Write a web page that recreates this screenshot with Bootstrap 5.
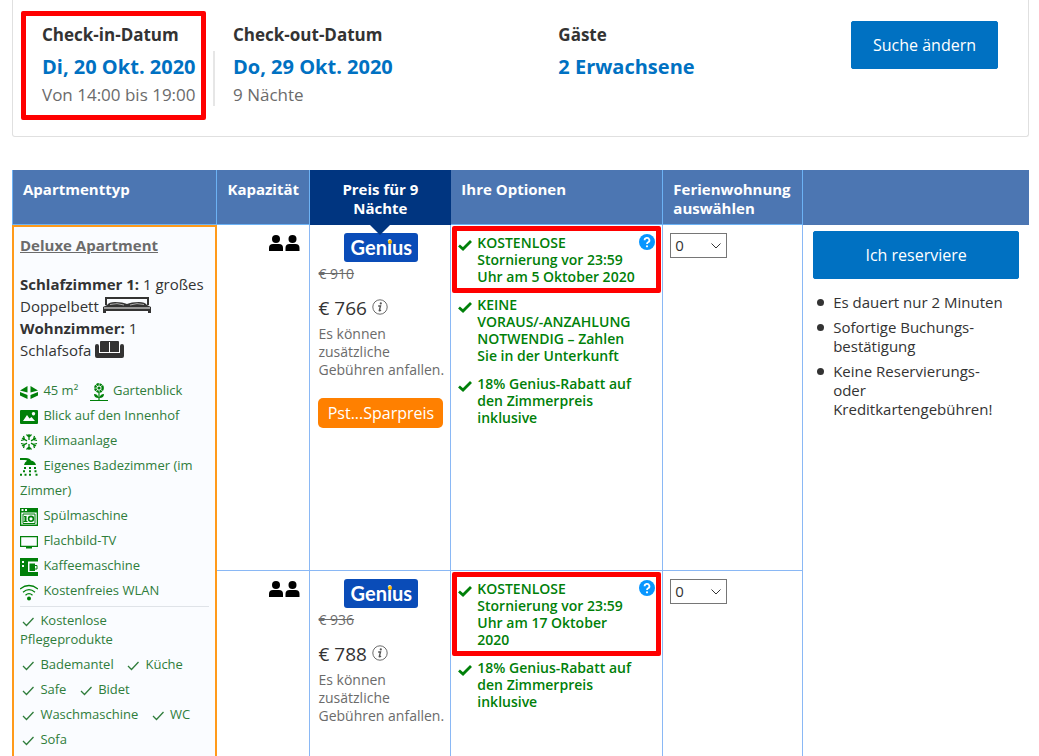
<!DOCTYPE html>
<html lang="de">
<head>
<meta charset="utf-8">
<meta name="viewport" content="width=device-width, initial-scale=1">
<title>Verfügbarkeit</title>
<link href="https://cdn.jsdelivr.net/npm/bootstrap@5.3.0/dist/css/bootstrap.min.css" rel="stylesheet">
<script src="https://cdn.jsdelivr.net/npm/bootstrap@5.3.0/dist/js/bootstrap.bundle.min.js"></script>
<style>
  body { font-family: "Open Sans", "Noto Sans", sans-serif; color: #333; font-size: 15px; line-height: 20px; }
  .page { padding: 0 10px 0 12px; height: 100vh; overflow: hidden; }
  a { color: inherit; }

  /* search summary */
  .summary { border: 1px solid #e0e0e0; border-top: 0; border-radius: 0 0 3px 3px; padding: 11px 30px 16px 8px; margin-bottom: 33px; }
  .marked { border: 5px solid #f00; border-radius: 2px; }
  .stay { width: 185px; height: 109px; padding: 5px 0 0 16px; }
  .fact { padding-top: 10px; }
  .fact-out { width: 33.3%; margin-left: 27px; }
  .rule-v { border-left: 2px solid #e6e6e6; height: 55px; margin: 40px -9px 0 7px; }
  .fact-label { font-size: 17px; font-weight: 700; line-height: 28px; }
  .fact-value { font-size: 20px; font-weight: 700; line-height: 36px; color: #0071c2; }
  .fact-sub { font-size: 17px; line-height: 20px; color: #6b6b6b; }
  .btn-cta { --bs-btn-bg: #0071c2; --bs-btn-border-color: #0071c2; --bs-btn-color: #fff; --bs-btn-hover-bg: #005999; --bs-btn-hover-color: #fff; --bs-btn-border-radius: 2px; --bs-btn-font-size: 16px; --bs-btn-line-height: 24px; --bs-btn-padding-y: 11px; --bs-btn-padding-x: 21px; }
  .change { margin-top: 10px; }

  /* room table */
  .rooms { width: 100%; table-layout: fixed; border-collapse: separate; border-spacing: 0; }
  .rooms th { background: #4c76b2; color: #fff; font-weight: 700; line-height: 19px; height: 55px; padding: 10px 0 5px 10px; vertical-align: top; border-right: 1px solid #6cb2f5; border-bottom: 1px solid #6cb2f5; }
  .rooms th:first-child { border-left: 1px solid #6cb2f5; }
  .rooms th:last-child { border-right: 0; border-bottom: 0; }
  .rooms th.th-price { background: #003580; border-color: #003580; padding: 10px 10px 5px; text-align: center; position: relative; }
  .th-price::after { content: ""; position: absolute; top: 100%; left: 50%; margin-left: -11px; border: 11px solid transparent; border-top-color: #003580; border-bottom: 0; z-index: 1; }
  .rooms td { vertical-align: top; border-right: 1px solid #8ab8f5; border-bottom: 1px solid #8ab8f5; }
  .rooms td.cell-room { border: 2px solid #ff9a1a; background: #fafcff; padding: 8px 6px 20px; }
  .rooms td.cell-book { border-right: 0; border-bottom: 0; padding: 6px 10px 0; }
  .offer { height: 346px; }
  .cell-cap { text-align: right; padding: 7px 9px 0 0; }
  .cell-price { padding: 8px 6px 0 8px; }
  .cell-opt { padding: 0; }
  .cell-qty { padding: 8px 0 0 7px; }

  .room-name { font-weight: 700; color: #6b6b6b; }
  .beds { line-height: 22px; margin-top: 18px; }
  .beds svg { vertical-align: -2px; }
  .icn { width: 18px; height: 18px; fill: #008009; }
  .facts { font-size: 13px; line-height: 25px; color: #2f7d3b; margin-top: 17px; }
  .facts .icn { margin-right: 2px; }
  .extras { font-size: 13px; line-height: 19px; color: #2f7d3b; border-top: 1px solid #dfe3e8; padding-top: 4px; margin-top: 3px; }
  .extra-row { margin-bottom: 6px; }
  .extras .icn { width: 15px; height: 13px; fill: none; stroke: #2f7d3b; stroke-width: 1.3; margin-right: 2px; }

  .genius { background: #0a4cb8; color: #fff; font: 700 20px/29px "Lato", sans-serif; width: 74px; height: 29px; border-radius: 3px; margin: 0 auto; text-align: center; }
  .genius-i { position: relative; }
  .genius-i::before { content: ""; position: absolute; left: 50%; margin-left: -2px; top: 5px; width: 4px; height: 4px; border-radius: 50%; background: #feba02; }
  .was { font-size: 14px; line-height: 24px; color: #6b6b6b; }
  .now { font-size: 19px; line-height: 24px; margin-top: 10px; }
  .fees { font-size: 14px; line-height: 18px; color: #6b6b6b; margin-top: 5px; white-space: nowrap; }
  .deal { background: #ff8000; color: #fff; font-size: 16px; line-height: 30px; border-radius: 5px; text-align: center; margin-top: 19px; width: 125px; }

  .opt { font-size: 14px; font-weight: 600; line-height: 17px; color: #008009; display: flex; }
  .opt .tick { width: 14px; height: 12px; flex: none; margin: 5px 5px 0 0; }
  .opt-box { margin: 1px 1px 0; padding: 3px 0 3px 1px; }
  .opt-plain { padding: 3px 24px 0 7px; }
  .opt-plain + .opt-plain { padding-top: 11px; }
  .help { width: 16px; height: 16px; margin: 0 1px 0 auto; flex: none; }
  .qty { width: 57px; height: 25px; border: 1px solid #767676; border-radius: 0; padding: 0 4px; font-size: 15px; line-height: 23px; color: #333;
    background: #fff url("data:image/svg+xml,%3Csvg xmlns='http://www.w3.org/2000/svg' viewBox='0 0 10 6'%3E%3Cpath fill='none' stroke='%23333' d='M.5.5 5 5 9.5.5'/%3E%3C/svg%3E") no-repeat right 5px center / 10px 6px; }
  .perks { margin: 14px 0 0; padding-left: 20px; line-height: 19px; list-style: none; }
  .perks li { margin-bottom: 6px; position: relative; }
  .perks li::before { content: ""; position: absolute; left: -16px; top: 6px; width: 7px; height: 7px; border-radius: 50%; background: #333; }
</style>
</head>
<body>
<svg class="d-none" aria-hidden="true">
  <symbol id="person2" viewBox="0 0 31 17"><circle cx="7" cy="4" r="4"/><path d="M0 16v-3q0-4 4-4h6q4 0 4 4v3z"/><circle cx="23.500" cy="4" r="4"/><path d="M16.500 16v-3q0-4 4-4h6q4 0 4 4v3z"/></symbol>
  <symbol id="tick" viewBox="0 0 14 12"><path d="M1 6.500l4 3.500L13 2" fill="none" stroke="#008009" stroke-width="2.800"/></symbol>
  <symbol id="thin" viewBox="0 0 15 13"><path d="M3 7l3.500 3.500L13.500 3"/></symbol>
  <symbol id="q" viewBox="0 0 16 16"><circle cx="8" cy="8" r="8" fill="#0896ff"/><path d="M5.600 6.200a2.400 2.300 0 1 1 3.500 2Q8 8.800 8 10" fill="none" stroke="#fff" stroke-width="1.800"/><circle cx="8" cy="12.300" r="1.100" fill="#fff"/></symbol>
  <symbol id="info" viewBox="0 0 16 16"><circle cx="8" cy="8" r="7.200" fill="none" stroke="#6b6b6b"/><circle cx="8.800" cy="4.400" r="1.100" fill="#555"/><path d="M6.200 7h2.300l-1.200 4.600q.6.300 1.700-.6" fill="none" stroke="#555" stroke-width="1.400"/></symbol>
</svg>

<main class="page">
  <section class="summary d-flex align-items-start">
    <div class="stay marked flex-shrink-0">
      <div class="fact-label">Check-in-Datum</div>
      <div class="fact-value">Di, 20 Okt. 2020</div>
      <div class="fact-sub">Von 14:00 bis 19:00</div>
    </div>
    <div class="rule-v"></div>
    <div class="fact fact-out">
      <div class="fact-label">Check-out-Datum</div>
      <div class="fact-value">Do, 29 Okt. 2020</div>
      <div class="fact-sub">9 Nächte</div>
    </div>
    <div class="fact flex-grow-1">
      <div class="fact-label">Gäste</div>
      <div class="fact-value">2 Erwachsene</div>
    </div>
    <button type="button" class="btn btn-cta change">Suche ändern</button>
  </section>

  <table class="rooms">
    <colgroup><col style="width:20.2%"><col style="width:9.15%"><col style="width:13.85%"><col style="width:20.85%"><col style="width:13.75%"><col></colgroup>
    <thead>
      <tr><th>Apartmenttyp</th><th>Kapazität</th><th class="th-price">Preis für 9 Nächte</th><th>Ihre Optionen</th><th>Ferienwohnung auswählen</th><th></th></tr>
    </thead>
    <tbody>
      <tr class="offer">
        <td class="cell-room" rowspan="2">
          <a href="#" class="room-name">Deluxe Apartment</a>
          <div class="beds">
            <b>Schlafzimmer 1:</b> 1 großes Doppelbett
            <svg width="48" height="17" viewBox="0 0 48 17" fill="#333"><path d="M2 0h44v8h-2V2H4v6H2z"/><path d="M4 8q2-3 8-3 8 0 12 2 4-2 12-2 6 0 8 3l4 2v6h-3v-2H3v2H0v-6z"/><path d="M7 7.500q7-2 14 .5M27 8q7-2.500 14-.5" fill="none" stroke="#aaa"/><path d="M1 11h46" stroke="#fff" stroke-width="1.200"/></svg><br>
            <b>Wohnzimmer:</b> 1 Schlafsofa
            <svg width="29" height="17" viewBox="0 0 29 17" fill="#333"><path d="M5 1q0-1 1-1h17q1 0 1 1v10H5z"/><path d="M0 5q0-2 2-2t2 2v7h21V5q0-2 2-2t2 2v10q0 2-2 2H2q-2 0-2-2z"/><path d="M4.500 2v9.500h20V2M14.500 1v10" fill="none" stroke="#fff"/></svg>
          </div>
          <div class="facts">
            <div>
              <svg class="icn" viewBox="0 0 18 18"><path d="M7.500 3v6.500L0 7.500zM10.500 3v6.500L18 7.500zM0 9l7.500 3v4L0 12.500zM18 9l-7.500 3v4l7.500-3.500z"/></svg>
              45 m²
              <svg class="icn ms-2" viewBox="0 0 18 18"><circle cx="9" cy="5" r="3.700" fill="none" stroke="#008009" stroke-width="2.400" stroke-dasharray="2.300 .6"/><circle cx="9" cy="5" r="1.600"/><path d="M8.400 9h1.200v8H8.400zM8.500 15Q4 15 4 11q4 0 4.500 4zM9.500 15q4.500 0 4.500-4-4 0-4.500 4zM0 17h18v1H0z"/></svg>
              Gartenblick
            </div>
            <div>
              <svg class="icn" viewBox="0 0 18 18"><path fill-rule="evenodd" d="M1 2h16q1 0 1 1v12q0 1-1 1H1q-1 0-1-1V3q0-1 1-1zm2 11h12l-3.500-4-2 1.500L7 7zM13.500 4a1.700 1.700 0 1 0 .01 0z"/></svg>
              Blick auf den Innenhof
            </div>
            <div>
              <svg class="icn" viewBox="0 0 18 18" style="stroke:#008009;fill:none"><path stroke-width="1.300" d="M9 1v6M9 11v6M2 5l5 2.900M11 10.100l5 2.900M16 5l-5 2.900M7 10.100L2 13M6.500 1.500L9 4l2.500-2.500M6.500 16.500L9 14l2.500 2.500M1 7.500l3.500-1L3.500 3M17 10.500l-3.500 1 1 3.500M17 7.500l-3.500-1 1-3.500M1 10.500l3.500 1-1 3.500"/></svg>
              Klimaanlage
            </div>
            <div>
              <svg class="icn" viewBox="0 0 18 18"><path d="M0 0h6q4 0 5 2.500 4 .5 5 4.500H4q.5-3 3-4.200Q6.500 2 5 2H0z"/><path d="M4 9h2v2H4zM9 9h2v2H9zM14 9h2v2h-2zM3 12.200h2v2H3zM9 12.200h2v2H9zM14.500 12.200h2v2h-2zM0 15.800h2v2H0zM4.500 15.800h2v2h-2zM9 15.800h2v2H9zM15.500 15.800h2v2h-2z"/></svg>
              Eigenes Badezimmer (im Zimmer)
            </div>
            <div>
              <svg class="icn" viewBox="0 0 18 18"><path fill-rule="evenodd" d="M0 0h18v18H0zM1.500 1v2h2V1zm3.500 0v2h2V1zM1.300 4.500v12h15.400v-12z"/><path d="M4 8h2.500v5h1V14H3.500v-1H4.500V9H4z"/><path d="M3 6h12v9.500H3z" fill="none" stroke="#008009"/><circle cx="11" cy="10.800" r="2.400" fill="none" stroke="#008009" stroke-width="1.600"/></svg>
              Spülmaschine
            </div>
            <div>
              <svg class="icn" viewBox="0 0 18 18"><path fill-rule="evenodd" d="M0 3h18v11h-6v1.500H6V14H0zm1.200 1.200v8.600h15.600V4.200z"/></svg>
              Flachbild-TV
            </div>
            <div>
              <svg class="icn" viewBox="0 0 18 18"><path fill-rule="evenodd" d="M0 0h18v3.500H8V14h10v4H0zM2 3v2h2V3zm0 4v2h2V7z"/><path d="M9.500 5.500H15V13H9.500z"/><path d="M15 7.500h2v3.500h-2" fill="none" stroke="#008009"/></svg>
              Kaffeemaschine
            </div>
            <div>
              <svg class="icn" viewBox="0 0 18 18"><path d="M0 6q9-7 18 0M3 9.200q6-5 12 0M5.500 12.200q3.500-3 7 0" fill="none" stroke="#008009" stroke-width="1.300"/><circle cx="9" cy="15.500" r="2"/></svg>
              Kostenfreies WLAN
            </div>
          </div>
          <div class="extras">
            <div class="extra-row"><svg class="icn"><use href="#thin"/></svg> Kostenlose<br>Pflegeprodukte</div>
            <div class="extra-row"><svg class="icn"><use href="#thin"/></svg> Bademantel <svg class="icn ms-2"><use href="#thin"/></svg> Küche</div>
            <div class="extra-row"><svg class="icn"><use href="#thin"/></svg> Safe <svg class="icn ms-2"><use href="#thin"/></svg> Bidet</div>
            <div class="extra-row"><svg class="icn"><use href="#thin"/></svg> Waschmaschine <svg class="icn ms-2"><use href="#thin"/></svg> WC</div>
            <div class="extra-row"><svg class="icn"><use href="#thin"/></svg> Sofa</div>
          </div>
        </td>
        <td class="cell-cap"><svg width="31" height="17"><use href="#person2"/></svg></td>
        <td class="cell-price">
          <div class="genius">Gen<span class="genius-i">i</span>us</div>
          <div class="was"><s>€ 910</s></div>
          <div class="now">€ 766 <svg width="16" height="16" class="align-baseline"><use href="#info"/></svg></div>
          <div class="fees">Es können<br>zusätzliche<br>Gebühren anfallen.</div>
          <div class="deal">Pst...Sparpreis</div>
        </td>
        <td class="cell-opt">
          <div class="opt opt-box marked"><svg class="tick"><use href="#tick"/></svg><span>KOSTENLOSE<br>Stornierung vor 23:59<br>Uhr am 5 Oktober 2020</span><svg class="help"><use href="#q"/></svg></div>
          <div class="opt opt-plain"><svg class="tick"><use href="#tick"/></svg><span>KEINE<br>VORAUS/-ANZAHLUNG<br>NOTWENDIG – Zahlen<br>Sie in der Unterkunft</span></div>
          <div class="opt opt-plain"><svg class="tick"><use href="#tick"/></svg><span>18% Genius-Rabatt auf<br>den Zimmerpreis<br>inklusive</span></div>
        </td>
        <td class="cell-qty"><select class="qty form-select" aria-label="Anzahl, 766 Euro"><option>0</option><option>1</option></select></td>
        <td class="cell-book" rowspan="2">
          <button type="button" class="btn btn-cta w-100">Ich reserviere</button>
          <ul class="perks">
            <li>Es dauert nur 2 Minuten</li>
            <li>Sofortige Buchungs-<br>bestätigung</li>
            <li>Keine Reservierungs-<br>oder<br>Kreditkartengebühren!</li>
          </ul>
        </td>
      </tr>
      <tr>
        <td class="cell-cap"><svg width="31" height="17"><use href="#person2"/></svg></td>
        <td class="cell-price">
          <div class="genius">Gen<span class="genius-i">i</span>us</div>
          <div class="was"><s>€ 936</s></div>
          <div class="now">€ 788 <svg width="16" height="16" class="align-baseline"><use href="#info"/></svg></div>
          <div class="fees">Es können<br>zusätzliche<br>Gebühren anfallen.</div>
        </td>
        <td class="cell-opt">
          <div class="opt opt-box marked"><svg class="tick"><use href="#tick"/></svg><span>KOSTENLOSE<br>Stornierung vor 23:59<br>Uhr am 17 Oktober<br>2020</span><svg class="help"><use href="#q"/></svg></div>
          <div class="opt opt-plain"><svg class="tick"><use href="#tick"/></svg><span>18% Genius-Rabatt auf<br>den Zimmerpreis<br>inklusive</span></div>
        </td>
        <td class="cell-qty"><select class="qty form-select" aria-label="Anzahl, 788 Euro"><option>0</option><option>1</option></select></td>
      </tr>
    </tbody>
  </table>
</main>
</body>
</html>
